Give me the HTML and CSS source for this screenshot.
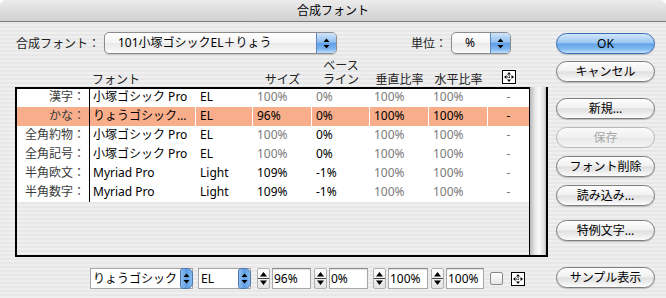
FILE: index.html
```html
<!DOCTYPE html>
<html lang="ja">
<head>
    <meta charset="UTF-8">
    <title>合成フォント</title>
    <link rel="stylesheet" href="styles.css">
</head>
<body>
    <div class="window">
        <div class="titlebar">合成フォント</div>
        <div class="content">
            <div class="main">
                <div class="toprow">
                    <span class="set-label">合成フォント：</span>
                    <div class="popup popup-set">
                        <span class="popup-text">101小塚ゴシックEL＋りょう</span>
                        <span class="popup-arrows">
                            <svg width="7" height="11" viewBox="0 0 7 11"><path d="M3.5 0.5L6.5 4H0.5Z M0.5 7H6.5L3.5 10.5Z" fill="#000"/></svg>
                        </span>
                    </div>
                    <span class="unit-label">単位：</span>
                    <div class="popup popup-unit">
                        <span class="popup-text">%</span>
                        <span class="popup-arrows">
                            <svg width="7" height="11" viewBox="0 0 7 11"><path d="M3.5 0.5L6.5 4H0.5Z M0.5 7H6.5L3.5 10.5Z" fill="#000"/></svg>
                        </span>
                    </div>
                </div>

                <div class="cols header">
                    <div></div>
                    <div class="h-font">フォント</div>
                    <div></div>
                    <div>サイズ</div>
                    <div class="h-two">
                        <div>ベース</div>
                        <div>ライン</div>
                    </div>
                    <div>垂直比率</div>
                    <div>水平比率</div>
                    <div class="h-icon">
                        <svg width="14" height="14" viewBox="0 0 14 14">
                            <rect x="0.5" y="0.5" width="13" height="13" fill="#fff" stroke="#000"/>
                            <path d="M7 5v4M5 7h4" stroke="#000" stroke-dasharray="1 1"/>
                            <path d="M7 2l-2 2.5h4z M7 12l-2-2.5h4z M2 7l2.5-2v4z M12 7l-2.5-2v4z" fill="#000"/>
                        </svg>
                    </div>
                </div>

                <div class="frame">
                    <div class="list">
                        <div class="cols row">
                            <div class="name">漢字：</div>
                            <div class="font">小塚ゴシック Pro</div>
                            <div>EL</div>
                            <div class="dim">100%</div>
                            <div class="dim">0%</div>
                            <div class="dim">100%</div>
                            <div class="dim">100%</div>
                            <div class="dash dim">-</div>
                        </div>
                        <div class="cols row sel">
                            <div class="name">かな：</div>
                            <div class="font">りょうゴシック…</div>
                            <div>EL</div>
                            <div>96%</div>
                            <div>0%</div>
                            <div>100%</div>
                            <div>100%</div>
                            <div class="dash">-</div>
                        </div>
                        <div class="cols row">
                            <div class="name">全角約物：</div>
                            <div class="font">小塚ゴシック Pro</div>
                            <div>EL</div>
                            <div class="dim">100%</div>
                            <div>0%</div>
                            <div class="dim">100%</div>
                            <div class="dim">100%</div>
                            <div class="dash dim">-</div>
                        </div>
                        <div class="cols row">
                            <div class="name">全角記号：</div>
                            <div class="font">小塚ゴシック Pro</div>
                            <div>EL</div>
                            <div class="dim">100%</div>
                            <div>0%</div>
                            <div class="dim">100%</div>
                            <div class="dim">100%</div>
                            <div class="dash dim">-</div>
                        </div>
                        <div class="cols row">
                            <div class="name">半角欧文：</div>
                            <div class="font">Myriad Pro</div>
                            <div>Light</div>
                            <div>109%</div>
                            <div>-1%</div>
                            <div class="dim">100%</div>
                            <div class="dim">100%</div>
                            <div class="dash dim">-</div>
                        </div>
                        <div class="cols row">
                            <div class="name">半角数字：</div>
                            <div class="font">Myriad Pro</div>
                            <div>Light</div>
                            <div>109%</div>
                            <div>-1%</div>
                            <div class="dim">100%</div>
                            <div class="dim">100%</div>
                            <div class="dash dim">-</div>
                        </div>
                    </div>
                    <div class="scrollbar"></div>
                </div>

                <div class="bottomrow">
                    <div class="mini-popup mp-font">
                        <span class="mp-text">りょうゴシック</span>
                        <span class="mp-arrows"><svg width="7" height="11" viewBox="0 0 7 11"><path d="M3.5 0.5L6.5 4H0.5Z M0.5 7H6.5L3.5 10.5Z" fill="#000"/></svg></span>
                    </div>
                    <div class="mini-popup mp-style">
                        <span class="mp-text">EL</span>
                        <span class="mp-arrows"><svg width="7" height="11" viewBox="0 0 7 11"><path d="M3.5 0.5L6.5 4H0.5Z M0.5 7H6.5L3.5 10.5Z" fill="#000"/></svg></span>
                    </div>
                    <div class="stepper st1"><svg width="13" height="21" viewBox="0 0 13 21"><path d="M6.5 4L10 8.5H3Z M3 12.5H10L6.5 17Z" fill="#000"/><path d="M1 10.5H12" stroke="#444"/></svg></div>
                    <div class="field f1">96%</div>
                    <div class="stepper st2"><svg width="13" height="21" viewBox="0 0 13 21"><path d="M6.5 4L10 8.5H3Z M3 12.5H10L6.5 17Z" fill="#000"/><path d="M1 10.5H12" stroke="#444"/></svg></div>
                    <div class="field f2">0%</div>
                    <div class="stepper st3"><svg width="13" height="21" viewBox="0 0 13 21"><path d="M6.5 4L10 8.5H3Z M3 12.5H10L6.5 17Z" fill="#000"/><path d="M1 10.5H12" stroke="#444"/></svg></div>
                    <div class="field f3">100%</div>
                    <div class="stepper st4"><svg width="13" height="21" viewBox="0 0 13 21"><path d="M6.5 4L10 8.5H3Z M3 12.5H10L6.5 17Z" fill="#000"/><path d="M1 10.5H12" stroke="#444"/></svg></div>
                    <div class="field f4">100%</div>
                    <div class="checkbox"></div>
                    <svg class="move-icon" width="14" height="14" viewBox="0 0 14 14">
                        <rect x="0.5" y="0.5" width="13" height="13" fill="#fff" stroke="#000"/>
                        <path d="M7 5v4M5 7h4" stroke="#000" stroke-dasharray="1 1"/>
                        <path d="M7 2l-2 2.5h4z M7 12l-2-2.5h4z M2 7l2.5-2v4z M12 7l-2.5-2v4z" fill="#000"/>
                    </svg>
                </div>
            </div>

            <div class="side">
                <div class="btn default b-ok">OK</div>
                <div class="btn b-cancel">キャンセル</div>
                <div class="btn b-new">新規…</div>
                <div class="btn disabled b-mid">保存</div>
                <div class="btn b-mid">フォント削除</div>
                <div class="btn b-mid">読み込み…</div>
                <div class="btn b-special">特例文字…</div>
                <div class="btn b-sample">サンプル表示</div>
            </div>
        </div>
    </div>
</body>
</html>
```

FILE: styles.css
```css
* {
    box-sizing: border-box;
}
body {
    margin: 0;
    background: #fff;
    font-family: "Noto Sans", "Noto Sans CJK JP", sans-serif;
    font-size: 12px;
    color: #000;
}
.window {
    width: 666px;
    height: 298px;
    border-radius: 6px 6px 0 0;
    overflow: hidden;
    background: repeating-linear-gradient(#efefef 0, #efefef 2px, #e7e7e7 2px, #e7e7e7 4px);
}
.titlebar {
    height: 22px;
    border-bottom: 1px solid #7d7d7d;
    background: linear-gradient(#ececec, #d0d0d0);
    text-align: center;
    line-height: 21px;
    font-size: 12px;
}
.content {
    display: flex;
    gap: 8px;
    padding: 10px 0 0 15px;
}
.main {
    width: 533px;
}

/* top row */
.toprow {
    display: flex;
    align-items: center;
    height: 22px;
}
.set-label {
    width: 89px;
    padding-left: 1px;
    color: #222;
}
.unit-label {
    width: 40px;
    margin-left: 74px;
    color: #222;
}
.popup {
    display: flex;
    height: 22px;
    border: 1px solid #8c8c8c;
    border-radius: 5px;
    overflow: hidden;
    background: linear-gradient(#ffffff, #f4f4f4 50%, #e9e9e9 52%, #fafafa);
    box-shadow: 0 1px 1px rgba(0, 0, 0, 0.15);
}
.popup-set {
    width: 233px;
}
.popup-unit {
    width: 60px;
}
.popup-text {
    flex: 1;
    padding-left: 13px;
    line-height: 20px;
    white-space: nowrap;
}
.popup-arrows {
    width: 20px;
    display: flex;
    align-items: center;
    justify-content: center;
    border-left: 1px solid #5f86bd;
    background: linear-gradient(#cfe4fa, #94c1f0 45%, #5f9fe6 52%, #7db6f0 80%, #bfdffc);
}

/* column grid shared by header and rows */
.cols {
    display: grid;
    grid-template-columns: 73px 106px 57px 59px 58px 59px 59px 41px;
}
.header {
    height: 33px;
    padding-left: 2px;
    align-items: end;
    line-height: 14px;
    text-align: center;
    color: #222;
}
.header .h-font {
    text-align: left;
    padding-left: 2px;
}
.h-two {
    display: flex;
    flex-direction: column;
}
.h-icon {
    display: flex;
    justify-content: center;
    margin-bottom: 3px;
}

/* list */
.frame {
    display: flex;
    height: 170px;
    border: 2px solid #000;
    border-top: 0;
}
.list {
    width: 513px;
    border-top: 2px solid #000;
    border-right: 1px solid #000;
}
.scrollbar {
    flex: 1;
    background: linear-gradient(to right, #b7b7b7, #e6e6e6 30%, #fbfbfb 55%, #e2e2e2 85%, #c2c2c2);
}
.row {
    height: 19px;
    line-height: 17px;
    background: #fff;
}
.row:first-child {
    height: 18px;
    line-height: 16px;
}
.row > div {
    padding-left: 4px;
    border-right: 1px solid #fff;
    white-space: nowrap;
    overflow: hidden;
}
.row .name {
    padding: 0 4px 0 0;
    border-right-color: #000;
    text-align: right;
    color: #3a3a3a;
}
.row .font {
    padding-left: 3px;
}
.row .dash {
    padding-left: 0;
    border-right: 0;
    text-align: center;
}
.row.sel {
    background: #f9ae8b;
}
.dim {
    color: #7a7a7a;
}

/* bottom controls */
.bottomrow {
    display: flex;
    align-items: center;
    height: 21px;
    margin-top: 11px;
    padding-left: 75px;
}
.mini-popup {
    display: flex;
    height: 21px;
    background: #fff;
    border: 1px solid #a5a5a5;
}
.mp-font {
    width: 103px;
}
.mp-style {
    width: 53px;
    margin-left: 5px;
}
.mp-text {
    flex: 1;
    padding-left: 2px;
    line-height: 19px;
    white-space: nowrap;
}
.mp-arrows {
    width: 13px;
    margin: -1px -1px -1px 0;
    display: flex;
    align-items: center;
    justify-content: center;
    border: 1px solid #4f78b3;
    border-radius: 3px 6px 6px 3px;
    background: linear-gradient(to right, #8fbef0, #5d9de4 50%, #86bbf0);
}
.stepper {
    width: 13px;
    height: 21px;
    border: 1px solid #b0b0b0;
    border-radius: 2px;
    background: linear-gradient(#fdfdfd, #e4e4e4);
    display: flex;
    align-items: center;
    justify-content: center;
}
.stepper svg {
    flex: none;
}
.st1 {
    margin-left: 6px;
}
.st2 {
    margin-left: 3px;
}
.st3 {
    margin-left: 5px;
}
.st4 {
    margin-left: 3px;
}
.field {
    height: 21px;
    margin-left: 2px;
    padding-left: 1px;
    line-height: 19px;
    background: #fff;
    border: 1px solid #a8a8a8;
    border-top-color: #8a8a8a;
    box-shadow: inset 0 1px 1px rgba(0, 0, 0, 0.12);
}
.f1, .f2 {
    width: 39px;
}
.f3 {
    width: 40px;
}
.f4 {
    width: 38px;
}
.checkbox {
    width: 13px;
    height: 13px;
    margin-left: 6px;
    border: 1px solid #8a8a8a;
    border-radius: 2px;
    background: linear-gradient(#ffffff, #e6e6e6);
}
.move-icon {
    margin-left: 8px;
}

/* right buttons */
.side {
    width: 99px;
    display: flex;
    flex-direction: column;
}
.btn {
    height: 21px;
    border: 1px solid #7c7c7c;
    border-radius: 11px;
    text-align: center;
    line-height: 19px;
    white-space: nowrap;
    background: linear-gradient(#fdfdfd, #f2f2f2 45%, #e0e0e0 52%, #ececec 75%, #fcfcfc);
    box-shadow: 0 1px 1px rgba(0, 0, 0, 0.2);
}
.btn.default {
    border-color: #3a6cb5;
    background: linear-gradient(#d3e7fb, #9cc8f3 45%, #62a3e8 52%, #82bbf1 80%, #c4e2fd);
}
.btn.disabled {
    color: #a9a9a9;
    border-color: #b8b8b8;
    box-shadow: none;
    background: linear-gradient(#fafafa, #f0f0f0 50%, #e8e8e8 52%, #f5f5f5);
}
.b-ok {
    margin-top: 1px;
}
.b-cancel {
    margin-top: 7px;
}
.b-new {
    margin-top: 16px;
}
.b-mid {
    margin-top: 8px;
}
.b-special {
    margin-top: 14px;
}
.b-sample {
    margin-top: 26px;
}
```
